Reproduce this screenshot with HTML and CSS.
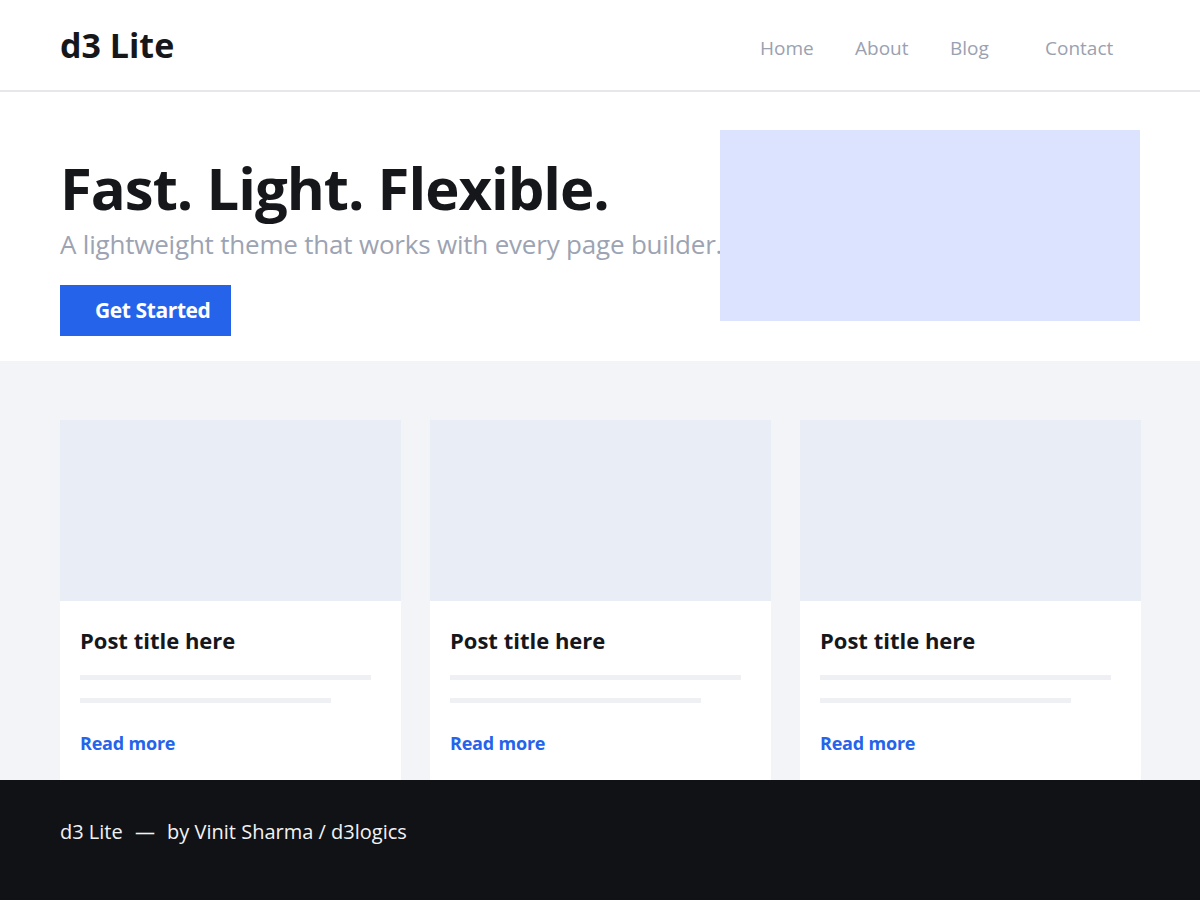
FILE: index.html
```html
<!DOCTYPE html>
<html lang="en">
<head>
  <meta charset="UTF-8">
  <title>d3 Lite</title>
  <link rel="stylesheet" href="styles.css">
</head>
<body>

  <header class="site-header">
    <div class="container header-inner">
      <div class="logo">d3 Lite</div>
      <nav class="nav">
        <a href="#">Home</a>
        <a href="#">About</a>
        <a href="#">Blog</a>
        <a href="#">Contact</a>
      </nav>
    </div>
  </header>

  <section class="hero">
    <div class="container hero-inner">
      <div class="hero-text">
        <h1>Fast. Light. Flexible.</h1>
        <p class="lead">A lightweight theme that works with every page builder.</p>
        <a class="btn" href="#">Get Started</a>
      </div>
      <div class="hero-media"></div>
    </div>
  </section>

  <section class="posts">
    <div class="container post-grid">
      <article class="card">
        <div class="card-thumb"></div>
        <div class="card-body">
          <h3>Post title here</h3>
          <div class="line"></div>
          <div class="line short"></div>
          <a class="more" href="#">Read more</a>
        </div>
      </article>
      <article class="card">
        <div class="card-thumb"></div>
        <div class="card-body">
          <h3>Post title here</h3>
          <div class="line"></div>
          <div class="line short"></div>
          <a class="more" href="#">Read more</a>
        </div>
      </article>
      <article class="card">
        <div class="card-thumb"></div>
        <div class="card-body">
          <h3>Post title here</h3>
          <div class="line"></div>
          <div class="line short"></div>
          <a class="more" href="#">Read more</a>
        </div>
      </article>
    </div>
  </section>

  <footer class="site-footer">
    <div class="container">d3 Lite <span class="dash">—</span> by Vinit Sharma / d3logics</div>
  </footer>

</body>
</html>
```

FILE: styles.css
```css
* {
  box-sizing: border-box;
}

body {
  margin: 0;
  font-family: 'Open Sans', 'Noto Sans', sans-serif;
  color: #16171b;
  background: #fff;
}

a {
  text-decoration: none;
}

.container {
  width: 1080px;
  margin: 0 auto;
}

/* header */
.site-header {
  height: 92px;
  border-bottom: 2px solid #e6e7eb;
}

.header-inner {
  height: 90px;
  display: flex;
  align-items: center;
  justify-content: space-between;
}

.logo {
  font-size: 34px;
  font-weight: 700;
}

.nav {
  width: 380px;
  display: grid;
  grid-template-columns: repeat(4, 1fr);
  padding-top: 5px;
}

.nav a {
  color: #9aa1b0;
  font-size: 19px;
}

/* hero */
.hero {
  padding: 38px 0 25px;
}

.hero-inner {
  display: flex;
  align-items: flex-start;
}

.hero-text {
  width: 660px;
  padding-top: 25px;
}

.hero h1 {
  margin: 0;
  font-size: 58px;
  line-height: 1.15;
  letter-spacing: -1px;
}

.lead {
  margin: 4px 0 23px;
  color: #9ca3b2;
  font-size: 26px;
  white-space: nowrap;
  letter-spacing: -0.2px;
}

.btn {
  display: inline-block;
  width: 171px;
  height: 51px;
  padding: 11px 0 0 35px;
  background: #2563eb;
  color: #fff;
  font-size: 21px;
  font-weight: 700;
  letter-spacing: -0.4px;
}

.hero-media {
  width: 421px;
  height: 191px;
  background: #dbe3ff;
}

/* posts */
.posts {
  background: #f3f4f8;
  padding-top: 59px;
  height: 419px;
  overflow: hidden;
}

.post-grid {
  display: grid;
  grid-template-columns: repeat(3, 341px);
  gap: 29px;
}

.card {
  background: #fff;
}

.card-thumb {
  height: 181px;
  background: #e8edf6;
}

.card-body {
  padding: 26px 30px 30px 20px;
}

.card h3 {
  margin: 0 0 22px;
  font-size: 22px;
  line-height: 1.2;
}

.line {
  height: 5px;
  background: #eef0f4;
  margin-bottom: 18px;
}

.line.short {
  width: 251px;
  margin-bottom: 28px;
}

.more {
  color: #2563eb;
  font-size: 18px;
  font-weight: 700;
  letter-spacing: -0.2px;
}

/* footer */
.site-footer {
  background: #111216;
  color: #f2f3f5;
  height: 120px;
  padding-top: 38px;
  font-size: 20px;
}

.dash {
  margin: 0 7px;
}
```
